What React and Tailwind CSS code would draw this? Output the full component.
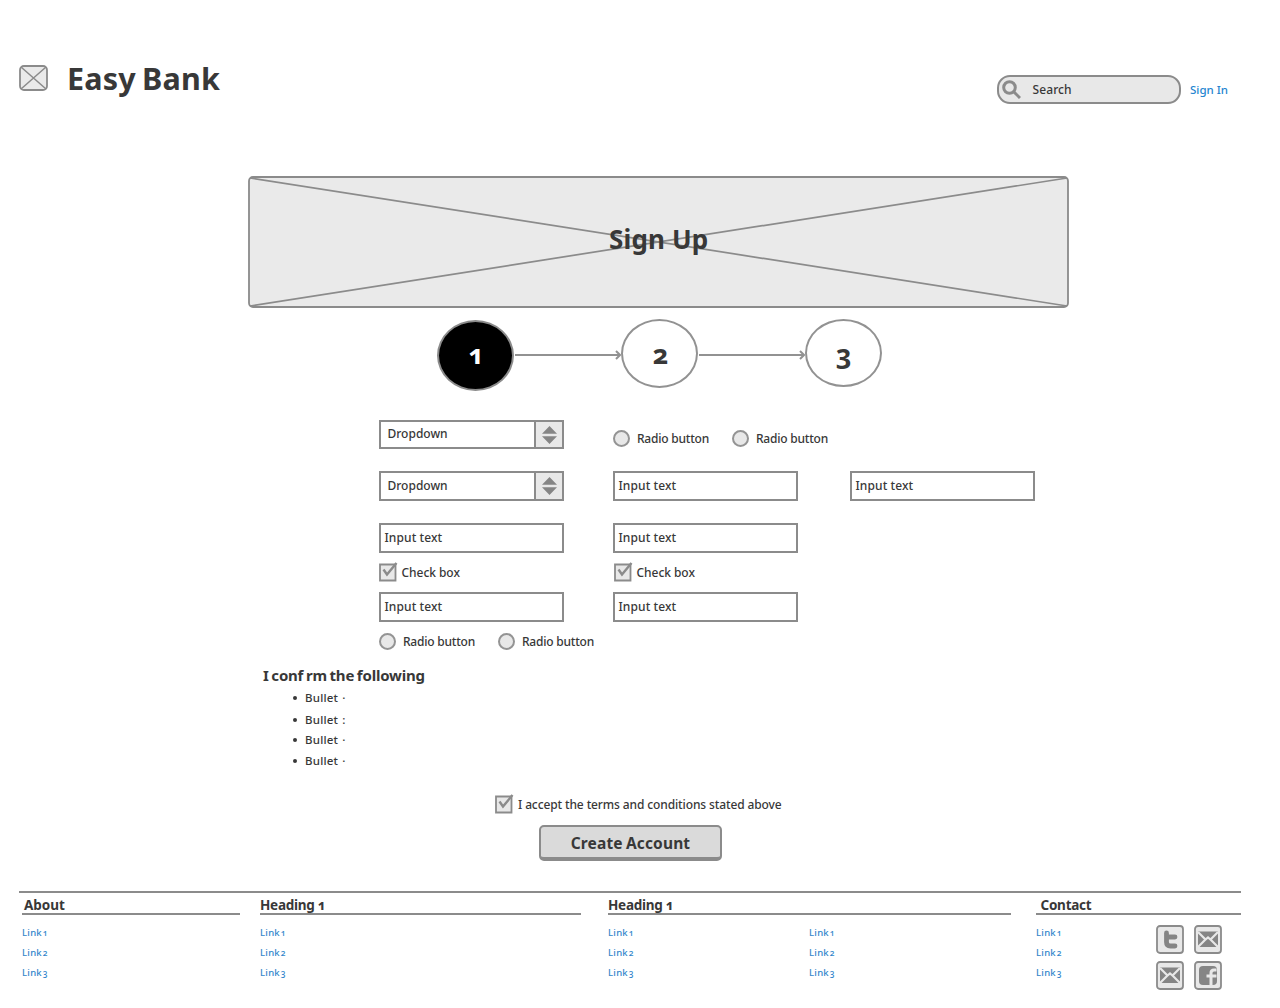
const Cross = ({ className, w, h, line }) => (
  <svg className={className} viewBox={`0 0 ${w} ${h}`} fill="none" stroke="#8b8b8b" strokeWidth="1.800">
    <rect x="1" y="1" width={w - 2} height={h - 2} rx="4" fill="#eaeaea" />
    <path d={`M2 2 ${w - 2} ${h - 2}M2 ${h - 2} ${w - 2} 2`} strokeWidth={line} />
  </svg>
);

const Dropdown = ({ className }) => (
  <div className={`flex w-[185px] shrink-0 border-2 border-[#8b8b8b] bg-white ${className}`}>
    <span className="flex-1 pl-[6.500px]">Dropdown</span>
    <span className="flex w-[28px] items-center justify-center border-l-2 border-[#8b8b8b] bg-[#e8e8e8]">
      <svg className="h-[18px] w-[15px]" viewBox="0 0 15 18" fill="#858585">
        <path d="M7.500 0 15 7.700H0zM7.500 18 0 10.300h15z" />
      </svg>
    </span>
  </div>
);

const Input = ({ className = "" }) => (
  <div className={`h-[30px] w-[185px] shrink-0 border-2 border-[#8b8b8b] bg-white pl-[3.500px] leading-[25px] tracking-[0.1px] ${className}`}>Input text</div>
);

const Box = () => (
  <svg className="h-[20px] w-[19px] shrink-0" viewBox="0 0 19 20" fill="none" stroke="#8b8b8b" strokeWidth="1.800">
    <path d="M1 2.500h15.500v16H1z" fill="#e8e8e8" />
    <path d="M4.500 7.500 8 12.500 17.500 1" strokeWidth="2.400" />
  </svg>
);

const Check = ({ className = "" }) => (
  <div className={`flex shrink-0 items-center ${className}`}>
    <Box />
    <span className="ml-[3.500px] pt-[3px] leading-[18px] tracking-[-0.05px]">Check box</span>
  </div>
);

const Radio = () => (
  <div className="flex w-[119px] shrink-0 items-center">
    <span className="h-[17px] w-[17px] rounded-full border-2 border-[#949494] bg-[#e8e8e8]" />
    <span className="ml-[7px] tracking-[-0.22px]">Radio button</span>
  </div>
);

const Arrow = () => (
  <svg className="mt-[30px] h-[12px] w-[107px]" viewBox="0 0 107 12" fill="none" stroke="#929292" strokeWidth="2">
    <path d="M1 6h105M102 2l4 4-4 4" />
  </svg>
);

const Links = ({ className = "" }) => (
  <ul className={`text-[9.5px] font-medium leading-[20px] tracking-[0.25px] text-[#3186cb] ${className}`}>
    {[1, 2, 3].map((n) => (
      <li key={n}>
        Link <span className="-ml-[2px] text-[8.500px]">{n}</span>
      </li>
    ))}
  </ul>
);

const Heading = ({ children, className = "" }) => (
  <h3 className={`h-[22px] border-b-2 border-[#8b8b8b] text-[13.5px] font-bold leading-[25px] ${className}`}>{children}</h3>
);

const Tile = ({ children }) => (
  <svg className="h-[29px] w-[28px]" viewBox="0 0 28 29">
    <rect x="1" y="1" width="26" height="27" rx="3" fill="#e8e8e8" stroke="#8b8b8b" strokeWidth="1.800" />
    {children}
  </svg>
);

const Mail = () => (
  <Tile>
    <path d="M4 6.500h20v15.500H4z" fill="#858585" />
    <path d="M4 7l7.500 7.500 2.500-2 2.500 2L24 7M4 22l7.500-7.500M24 22l-7.500-7.500" fill="none" stroke="#e8e8e8" strokeWidth="2.200" />
  </Tile>
);

const bullets = [
  ["·", "h-[22px]"],
  [":", "h-[21px]"],
  ["·", "h-[20px]"],
  ["·", "h-[21px]"],
];

export default function App() {
  return (
    <div className="flex h-[1008px] w-[1280px] flex-col overflow-hidden bg-white font-['Noto_Sans','Open_Sans',sans-serif] text-[12px] font-medium whitespace-nowrap text-[#383838] oldstyle-nums">
      <header className="flex h-[176px] shrink-0 items-start pl-[19px]">
        <Cross className="mt-[65px] h-[26px] w-[29px]" w={29} h={26} line="1.500" />
        <h1 className="mt-[57px] ml-[19px] w-[928px] text-[30.5px] font-bold leading-[42px] tracking-[0.2px] [word-spacing:-2px]">Easy Bank</h1>
        <div className="mt-[75px] ml-[2px] flex h-[29px] w-[184px] items-center rounded-[13px] border-2 border-[#8b8b8b] bg-[#e8e8e8]">
          <svg className="ml-[3px] h-[19px] w-[19px]" viewBox="0 0 19 19" fill="none" stroke="#8b8b8b" strokeWidth="3">
            <circle cx="7.500" cy="7.500" r="5.800" />
            <path d="m12 12 6 6" />
          </svg>
          <span className="ml-[11.500px] leading-[18px] tracking-[0.1px]">Search</span>
        </div>
        <a className="mt-[81px] ml-[9px] text-[11.5px] leading-[18px] text-[#2585d0]">Sign In</a>
      </header>

      <section className="ml-[248px] grid h-[132px] w-[821px] shrink-0">
        <Cross className="col-start-1 row-start-1 h-[132px] w-[821px]" w={821} h={132} line="1.700" />
        <h2 className="z-10 col-start-1 row-start-1 mt-[44px] ml-[361px] text-[26px] font-bold leading-[38px] tracking-[0.15px]">Sign Up</h2>
      </section>

      <div className="ml-[437px] flex h-[112px] shrink-0 items-start pt-[11px] text-[24px] font-bold">
        <div className="mt-[1px] flex h-[71px] w-[77px] items-center justify-center rounded-[50%] border-2 border-[#8b8b8b] bg-black pb-[3px] pl-[1px] text-[27px] text-white">1</div>
        <Arrow />
        <div className="flex h-[69px] w-[77px] items-center justify-center rounded-[50%] border-2 border-[#929292] pt-[2px] pl-[2px] text-[27px]">2</div>
        <Arrow />
        <div className="flex h-[68px] w-[77px] items-center justify-center rounded-[50%] border-2 border-[#929292] pt-[2px] text-[27px]">3</div>
      </div>

      <form className="ml-[379px] flex h-[239px] shrink-0 flex-col">
        <div className="flex h-[51px]">
          <Dropdown className="h-[29px] leading-[24px]" />
          <div className="ml-[49px] flex h-[37px] items-center">
            <Radio />
            <Radio />
          </div>
        </div>
        <div className="flex h-[52px]">
          <Dropdown className="h-[30px] leading-[26px]" />
          <Input className="ml-[49px]" />
          <Input className="ml-[52px]" />
        </div>
        <div className="flex h-[38px]">
          <Input />
          <Input className="ml-[49px]" />
        </div>
        <div className="flex h-[31px] items-start">
          <Check className="w-[235px]" />
          <Check />
        </div>
        <div className="flex h-[40px]">
          <Input />
          <Input className="ml-[49px]" />
        </div>
        <div className="flex h-[19px] items-center">
          <Radio />
          <Radio />
        </div>
      </form>

      <section className="ml-[263px] mt-[5px] h-[130px] shrink-0">
        <h3 className="text-[15px] font-bold leading-[22px] tracking-[-0.2px] [word-spacing:-1px]">I conf rm the following</h3>
        <ul className="ml-[30px] mt-[1px] text-[11.5px]">
          {bullets.map(([mark, height], i) => (
            <li key={i} className={`flex items-center ${height}`}>
              <span className="mr-[8px] h-[4px] w-[4px] rounded-full bg-[#383838]" />
              <span className="tracking-[0.2px] [word-spacing:1px]">Bullet {mark}</span>
            </li>
          ))}
        </ul>
      </section>

      <div className="ml-[495px] flex h-[31px] shrink-0 items-start">
        <Box />
        <span className="ml-[4px] mt-[1px] leading-[20px] tracking-[-0.12px]">I accept the terms and conditions stated above</span>
      </div>
      <button type="button" className="ml-[539px] h-[36px] w-[183px] shrink-0 rounded-[5px] border-2 border-b-4 border-[#8b8b8b] bg-[#dadada] pt-[1px] text-[15.5px] font-bold leading-[30px] tracking-[0.15px] [word-spacing:-1px]">Create Account</button>

      <footer className="mt-[30px] ml-[19px] h-[117px] w-[1222px] shrink-0 border-t-2 border-[#8b8b8b]">
        <div className="flex">
          <div className="ml-[3px] w-[238px]">
            <Heading className="w-[218px] pl-[2px]">About</Heading>
            <Links className="mt-[8px]" />
          </div>
          <div className="w-[348px]">
            <Heading className="w-[321px] tracking-[-0.25px]">Heading 1</Heading>
            <Links className="mt-[8px]" />
          </div>
          <div className="w-[428px]">
            <Heading className="w-[403px] tracking-[-0.25px]">Heading 1</Heading>
            <div className="mt-[8px] flex">
              <Links className="w-[201px]" />
              <Links />
            </div>
          </div>
          <div className="w-[205px]">
            <Heading className="pl-[4.500px] tracking-[-0.25px]">Contact</Heading>
            <div className="flex">
              <Links className="mt-[8px] w-[120px]" />
              <div className="mt-[10px] grid grid-cols-[28px_28px] gap-x-[10px] gap-y-[7px]">
                <Tile>
                  <path d="M10.500 8v9q0 4 4 4H19M10.500 12H19" fill="none" stroke="#858585" strokeWidth="4.800" strokeLinecap="round" strokeLinejoin="round" />
                </Tile>
                <Mail />
                <Mail />
                <Tile>
                  <rect x="5" y="5" width="18" height="19" rx="4" fill="#858585" />
                  <path d="M17 25V12q0-3 3-3h2.500M12.500 15h10" fill="none" stroke="#e8e8e8" strokeWidth="3" />
                </Tile>
              </div>
            </div>
          </div>
        </div>
      </footer>
    </div>
  );
}
